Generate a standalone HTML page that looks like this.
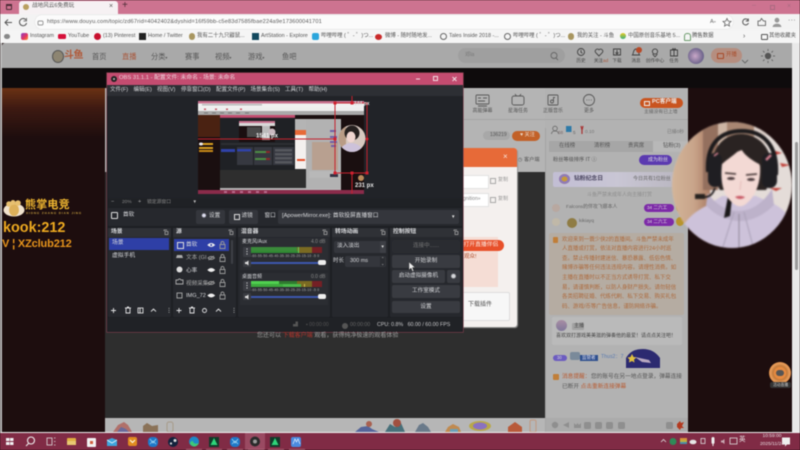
<!DOCTYPE html>
<html lang="zh"><head><meta charset="utf-8"><title>OBS</title>
<style>
html,body{margin:0;padding:0;width:800px;height:450px;overflow:hidden;background:#1d0d0e}
#w{position:absolute;left:0;top:0;width:800px;height:450px;overflow:hidden;font-family:"Liberation Sans","Noto Sans CJK SC",sans-serif;filter:blur(.42px)}
#w div{position:absolute}
.t{white-space:nowrap;line-height:1}
.tx{white-space:nowrap;line-height:1;color:#4b4b4b;font-size:5.6px}
.o{white-space:nowrap;line-height:1;color:#d9dadd;font-size:5.8px}
.n{white-space:nowrap;line-height:1;font-size:7.2px;color:#555}
.h{white-space:nowrap;line-height:1;font-size:4.6px;color:#444;text-align:center}
.b{white-space:nowrap;line-height:1;font-size:5.4px;color:#555}
.c{white-space:nowrap;line-height:1;font-size:5.45px;color:#ad6a3d;left:562px}
.dock{background:#26282d;border-radius:1px}
.hd{background:#2f3136;height:9px}
.btn{background:#393b41;border-radius:2px;text-align:center;color:#d5d6d9;font-size:5.6px;white-space:nowrap}
svg{position:absolute}
</style></head><body><div id="w">

<!-- tab strip -->
<div style="left:0;top:0;width:800px;height:14px;background:#cd7390"></div>
<div style="left:19px;top:1px;width:99px;height:13px;background:#f6f1f3;border-radius:3px 3px 0 0"></div>
<div style="left:6px;top:4px;width:4px;height:4px;border:1px solid #4a2c36;border-radius:1px"></div>
<div style="left:6px;top:4px;width:6px;height:2px;background:#4a2c36"></div>
<div style="left:23px;top:4px;width:6px;height:6px;background:#b9a060;border-radius:50%"></div>
<div class="t" style="left:32px;top:4px;font-size:5.600px;color:#555">战地风云6免费玩</div>
<div class="t" style="left:109px;top:3px;font-size:7px;color:#555">×</div>
<div class="t" style="left:122px;top:1px;font-size:10px;color:#4a2c36">+</div>
<div class="t" style="left:752px;top:2px;font-size:7px;color:#a86a80">–</div>
<div style="left:770px;top:5px;width:3px;height:3px;border:1px solid #a86a80"></div>
<div class="t" style="left:787px;top:3px;font-size:7px;color:#a86a80">×</div>

<!-- address bar -->
<div style="left:0;top:14px;width:800px;height:16px;background:#f3f3f3"></div>
<div style="left:35px;top:15px;width:698px;height:14px;background:#fbfbfb;border-radius:7px;box-shadow:0 0 0 .5px #e2e2e2"></div>
<svg style="left:0;top:14px" width="800" height="16" fill="none" stroke="#555" stroke-width="1">
<path d="M5 8.500h7M8 5.500l-3 3 3 3"/><path d="M26 6a3.600 3.600 0 1 0 .6 3"/><path d="M26.500 4v3h-3" stroke-width=".8"/>
<rect x="38" y="7" width="5" height="4" rx="1" stroke="#777" stroke-width=".7"/>
<path d="M727 4.500l1.200 2.600 2.800.3-2.100 1.900.6 2.800-2.500-1.500-2.500 1.500.6-2.800-2.100-1.900 2.800-.3z" stroke="#666" stroke-width=".8"/>
<path d="M748 6a3 3 0 1 0 .5 3M748.300 4.500v2.500h-2.500" stroke="#555"/>
<path d="M758 11.500V7h2l1.500-2.500L763.500 7h2v4.500z" stroke="#555" stroke-width=".8"/>
<circle cx="777" cy="6.200" r="2.400" fill="#999" stroke="none"/><path d="M772.500 13a4.500 3.400 0 0 1 9 0z" fill="#999" stroke="none"/>
</svg>
<div class="t" style="left:47px;top:19.500px;font-size:5.700px;color:#5a5a5a;letter-spacing:.13px">https://www.douyu.com/topic/zd67rid=4042402&amp;dyshid=16f59bb-c5e83d7585fbae224a9e173600041701</div>
<div class="t" style="left:710px;top:19.500px;font-size:5.500px;color:#666">A<span style="font-size:4px">»</span></div>
<div class="t" style="left:788px;top:17px;font-size:7px;color:#666;letter-spacing:.3px">···</div>

<!-- bookmarks -->
<div style="left:0;top:30px;width:800px;height:13px;background:#f5f5f5"></div>
<div style="left:4px;top:34px;width:6px;height:5px;background:#888;border-radius:3px"></div>
<div style="left:21px;top:33px;width:7px;height:7px;border-radius:2px;background:linear-gradient(135deg,#8a3cc8,#e8385a 60%,#f8a030)"></div>
<div style="left:58px;top:34px;width:8px;height:5px;border-radius:1.500px;background:#d6103a"></div>
<div style="left:94px;top:33px;width:7px;height:7px;border-radius:50%;background:#c8102e"></div>
<div style="left:139px;top:33px;width:7px;height:7px;background:#222"></div>
<div style="left:189px;top:33px;width:6px;height:7px;border-radius:3px;background:#a89660"></div>
<div style="left:252px;top:33px;width:7px;height:7px;background:#12495e"></div>
<div style="left:312px;top:33px;width:7px;height:7px;border-radius:2px;background:#2ca6dc"></div>
<div style="left:375px;top:34px;width:7px;height:6px;border-radius:50%;background:#c92a2a"></div>
<div style="left:440px;top:33px;width:5px;height:5px;border-radius:50%;border:1px solid #666"></div>
<div style="left:504px;top:33px;width:5px;height:5px;border-radius:50%;border:1px solid #666"></div>
<div style="left:568px;top:33px;width:6px;height:7px;border-radius:3px;background:#a89660"></div>
<div style="left:620px;top:33px;width:6px;height:6px;border-radius:50%;background:linear-gradient(#e8c820,#38b080)"></div>
<div style="left:684px;top:33px;width:5px;height:6px;border-radius:3px 3px 1px 1px;border:1px solid #6a9a6a"></div>
<div style="left:761px;top:34px;width:5px;height:4px;border:1px solid #555;border-radius:1px"></div>
<div class="b" style="left:30px;top:34px">Instagram</div>
<div class="b" style="left:68px;top:34px">YouTube</div>
<div class="b" style="left:103px;top:34px">(13) Pinterest</div>
<div class="b" style="left:148px;top:34px">Home / Twitter</div>
<div class="b" style="left:197px;top:34px">我有二十九只鼹鼠...</div>
<div class="b" style="left:261px;top:34px">ArtStation - Explore</div>
<div class="b" style="left:321px;top:34px">哔哩哔哩 ( ゜- ゜)つ...</div>
<div class="b" style="left:385px;top:34px">微博 - 随时随地发...</div>
<div class="b" style="left:449px;top:34px">Tales Inside 2018 -...</div>
<div class="b" style="left:513px;top:34px">哔哩哔哩 ( ゜- ゜)つ...</div>
<div class="b" style="left:577px;top:34px">我的关注 - 斗鱼</div>
<div class="b" style="left:628px;top:34px">中国原创音乐基地 5...</div>
<div class="b" style="left:692px;top:34px">腾售数据</div>
<div class="b" style="left:743px;top:33px;font-size:7px">›</div>
<div class="b" style="left:769px;top:34px">其他收藏夹</div>

<!-- page dim bg -->
<div style="left:0;top:43px;width:800px;height:390px;background:#1d0d0e"></div>
<div style="left:792px;top:43px;width:8px;height:389px;background:#e9e9e9"></div>
<div style="left:795px;top:142px;width:2.500px;height:128px;background:#9a9a9a;border-radius:2px"></div>
<div style="left:0;top:43px;width:2px;height:390px;background:#bbb"></div>

<!-- site header -->
<div style="left:2px;top:43px;width:790px;height:25px;background:#a9a9a9;border-radius:3px 0 0 0"></div>
<div style="left:2px;top:68px;width:790px;height:20px;background:#0e0b0c"></div>
<div style="left:2px;top:88px;width:104px;height:50px;background:linear-gradient(#6b3214,#3e1a12 40%,#1d0d0e)"></div>
<div style="left:52px;top:50px;width:10px;height:11px;border-radius:50%;background:#8d8572;border:1px solid #555"></div>
<div class="t" style="left:64px;top:50.500px;font-size:10px;font-weight:bold;color:#b05a3a;letter-spacing:-.5px">斗鱼</div>
<div class="n" style="left:92px;top:53px">首页</div>
<div class="n" style="left:122px;top:53px;color:#a8563a">直播</div>
<div class="n" style="left:151px;top:53px">分类<span style="font-size:4px">▾</span></div>
<div class="n" style="left:185px;top:53px">赛事</div>
<div class="n" style="left:215px;top:53px">视频<span style="font-size:4px">▾</span></div>
<div class="n" style="left:248px;top:53px">游戏<span style="font-size:4px">▾</span></div>
<div class="n" style="left:282px;top:53px">鱼吧</div>
<div style="left:458px;top:48px;width:107px;height:15px;border-radius:8px;background:#9f9f9f"></div>
<div class="t" style="left:465px;top:53px;font-size:5.200px;color:#777">邓la</div>
<svg style="left:0;top:43px" width="800" height="25" fill="none" stroke="#3f3f3f" stroke-width=".9">
<circle cx="554" cy="12.500" r="3" stroke="#666"/><path d="M556 15l2 2" stroke="#666"/>
<circle cx="581" cy="9" r="3.500"/><path d="M581 7v2.300l1.400 1"/>
<path d="M599 13l-3.500-3.600a2.200 2.200 0 0 1 3.500-2.600 2.200 2.200 0 0 1 3.500 2.600z"/>
<path d="M613.500 6h7v6h-7zM617 7v3.600M615.500 9.500l1.500 1.500 1.500-1.500"/>
<path d="M632.500 12c1-1 .6-6 3.500-6s2.500 5 3.500 6z"/>
<circle cx="655" cy="8.500" r="2.600"/><path d="M655 14l-2.400-3M655 14l2.400-3"/>
<path d="M670.500 7h7v6h-7zM674 7v6M672 7l1-1.500 1 1.500 1-1.500 1 1.500"/>
<circle cx="768" cy="13" r="3.200" fill="#555" stroke="none"/>
<path d="M768 6v2M768 18v2M761 13h2M773 13h2M763 8l1.500 1.500M771.500 16.500l1.500 1.500M763 18l1.500-1.500M771.500 9.500l1.500-1.500" stroke="#666"/>
<path d="M742 17l3 3 3-3" stroke="#666"/>
</svg>
<div style="left:636px;top:47px;width:6px;height:6px;border-radius:50%;background:#b84a28"></div>
<div class="h" style="left:571px;top:59px;width:20px">历史</div>
<div class="h" style="left:589px;top:59px;width:24px">关注<span style="color:#a8563a">ad</span></div>
<div class="h" style="left:607px;top:59px;width:20px">下载</div>
<div class="h" style="left:626px;top:59px;width:20px">消息</div>
<div class="h" style="left:643px;top:59px;width:24px">创作中心</div>
<div class="h" style="left:664px;top:59px;width:20px">任务</div>
<div style="left:688px;top:48px;width:16px;height:16px;border-radius:50%;background:radial-gradient(circle at 45% 50%,#c9a8c8,#73688f 65%,#58708a)"></div>
<div style="left:711px;top:48px;width:31px;height:15px;border-radius:8px;background:#b58e80"></div>
<div style="left:717px;top:53px;width:5px;height:4px;border:1px solid #a84a28;border-radius:1px"></div>
<div class="t" style="left:726px;top:53px;font-size:5.400px;color:#a84a28">开播</div>

<!-- video/left content -->
<div style="left:105px;top:88px;width:440px;height:330px;background:#2e2e2e"></div>
<div style="left:105px;top:88px;width:583px;height:84px;background:#b4b4b4"></div>
<div style="left:545px;top:88px;width:143px;height:344px;background:#b2b2b2"></div>
<div style="left:463px;top:118.500px;width:225px;height:.6px;background:#a5a5a5"></div>
<div style="left:105px;top:418px;width:440px;height:14px;background:#b6b6b6"></div>
<div style="left:545px;top:418px;width:143px;height:14px;background:#ababab"></div>
<div style="left:544.500px;top:128px;width:1px;height:304px;background:#a4a4a4"></div>

<!-- top tool icons -->
<svg style="left:460px;top:90px" width="230" height="40" fill="none" stroke="#585858" stroke-width=".9">
<rect x="16" y="5" width="13" height="9" rx="1"/><path d="M18 8h3M23 8h4M18 11h7M18 16h9"/>
<rect x="52" y="6" width="12" height="9" rx="2"/><path d="M55 4l1.500 2M61 4l-1.500 2"/>
<rect x="88" y="5" width="10" height="10" rx="1"/><circle cx="92" cy="11.500" r="1.500"/><path d="M93.500 11V7.500h1.500"/>
<circle cx="129" cy="10" r="5.500"/><path d="M126.500 10h.7M128.700 10h.7M130.900 10h.7"/>
</svg>
<div class="h" style="left:470px;top:109px;width:25px;font-size:5px;color:#555">高能弹幕</div>
<div class="h" style="left:505px;top:109px;width:26px;font-size:5px;color:#555">星海任务</div>
<div class="h" style="left:540px;top:109px;width:26px;font-size:5px;color:#555">正版音乐</div>
<div class="h" style="left:579px;top:109px;width:20px;font-size:5px;color:#555">更多</div>
<div style="left:640px;top:98px;width:43px;height:10px;border-radius:5px;background:#c9541f"></div>
<div style="left:644px;top:100.500px;width:4px;height:3px;border:.8px solid #eee"></div>
<div class="t" style="left:652px;top:100px;font-size:5.600px;font-weight:bold;color:#eee">PC客户端</div>
<div class="t" style="left:644px;top:111px;font-size:4.800px;color:#666">主播没有已上墙</div>

<div style="left:483px;top:131px;width:27px;height:9px;border-radius:5px;background:#a8a8a8"></div>
<div class="t" style="left:490px;top:133px;font-size:5px;color:#555">136219</div>
<div style="left:512px;top:131px;width:28px;height:10px;border-radius:5px;background:#c26128"></div>
<div class="t" style="left:520px;top:133px;font-size:5.200px;color:#ecd8c8">♥ 关注</div>
<div class="t" style="left:518px;top:158px;font-size:5.200px;color:#555">◷ 客户端</div>

<!-- chat head -->
<svg style="left:550px;top:125px" width="60" height="14" fill="none" stroke="#666" stroke-width=".8">
<circle cx="5" cy="3.500" r="2.300"/><path d="M1.500 9c0-4 7-4 7 0"/>
<rect x="16" y="1" width="5.500" height="6" fill="#2e7aa8" stroke="none"/>
<path d="M31 1l1 4 1-4M32 5v4" stroke="#a83030" stroke-width="1.200"/>
</svg>
<div class="t" style="left:558px;top:131px;font-size:4.600px;color:#7a6a6a">68</div>
<div class="t" style="left:573px;top:131px;font-size:4.600px;color:#666">5</div>
<div class="t" style="left:585px;top:131px;font-size:4.800px;color:#777">0.10</div>
<div class="t" style="left:667px;top:131px;font-size:4.800px;color:#777">已播0秒</div>
<div style="left:549px;top:141px;width:139px;height:11px;background:#a6a6a6"></div>
<div style="left:653px;top:141px;width:35px;height:11px;background:#b8b8b8"></div>
<div class="t" style="left:559px;top:144px;font-size:5.400px;color:#555">在线榜</div>
<div class="t" style="left:594px;top:144px;font-size:5.400px;color:#555">清积榜</div>
<div class="t" style="left:628px;top:144px;font-size:5.400px;color:#555">贵宾席</div>
<div class="t" style="left:663px;top:144px;font-size:5.400px;color:#555">钻粉(3)</div>
<div class="t" style="left:553px;top:157.500px;font-size:5.200px;color:#505050">粉丝等级排序 IT ⓘ</div>
<div style="left:639px;top:155px;width:33px;height:10px;border-radius:5px;background:#5b3ab0"></div>
<div class="t" style="left:648px;top:157.500px;font-size:5px;color:#ddd">成为粉丝</div>
<div style="left:553px;top:172px;width:129px;height:15px;border-radius:2px;background:linear-gradient(90deg,#c2bed4,#c9c6d4 50%,#b9b6c0)"></div>
<div style="left:559px;top:174px;width:11px;height:10px;border-radius:50%;background:#c69a3a;box-shadow:inset 0 0 0 2.500px #8f7ab8"></div>
<div class="t" style="left:574px;top:177px;font-size:5.800px;font-weight:bold;color:#4a4560">钻粉纪念日</div>
<div class="t" style="left:633px;top:177px;font-size:5px;color:#666">今日共有1位粉丝</div>
<div class="t" style="left:587px;top:193px;font-size:5px;color:#8e8e8e">斗鱼严禁未成年人向主播打赏</div>
<div style="left:552px;top:204px;width:8px;height:8px;border-radius:50%;background:#b8a8a0"></div>
<div class="t" style="left:566px;top:206px;font-size:4.900px;color:#666">Falcons的伴攻飞娜本人</div>
<div style="left:552px;top:218px;width:8px;height:8px;border-radius:50%;background:#c0b8a8"></div>
<div style="left:567px;top:218px;width:10px;height:10px;border-radius:50%;background:#8f7c44"></div>
<div class="t" style="left:579px;top:220px;font-size:4.900px;color:#666">kikiayq</div>
<div style="left:644px;top:204px;width:30px;height:8px;border-radius:4px;background:#7d2aa8"></div>
<div class="t" style="left:647px;top:206px;font-size:4.600px;color:#ddd">34 二六工</div>
<div style="left:644px;top:218px;width:30px;height:8px;border-radius:4px;background:#7d2aa8"></div>
<div class="t" style="left:647px;top:220px;font-size:4.600px;color:#ddd">34 二六工</div>
<div style="left:676px;top:203px;width:8px;height:9px;border-radius:50%;background:#b8942c"></div>
<div style="left:676px;top:217px;width:8px;height:9px;border-radius:50%;background:#b8942c"></div>

<!-- chat system message -->
<div style="left:549px;top:233px;width:135px;height:82px;background:#b5aca2;border-radius:2px"></div>
<div style="left:553px;top:237px;width:5px;height:6px;background:#c07e38;border-radius:1px"></div>
<div class="c" style="top:237.500px">欢迎来到一蓑少侠2的直播间。斗鱼严禁未成年</div>
<div class="c" style="top:247px">人直播或打赏，依法对直播内容进行24小时巡</div>
<div class="c" style="top:256.500px">查。禁止传播封建迷信、暴恐暴露、低俗色情、</div>
<div class="c" style="top:266px">赌博诈骗等任何违法违规内容。请理性消费。如</div>
<div class="c" style="top:276px">主播在直播时以不正当方式诱导打赏、私下交</div>
<div class="c" style="top:285.500px">易，请谨慎判断，以防人身财产损失。请勿轻信</div>
<div class="c" style="top:295px">各类招聘征婚、代练代刷、私下交易、购买礼包</div>
<div class="c" style="top:305px">码、游戏/币等广告信息，谨防网络诈骗。</div>

<div style="left:552px;top:317px;width:130px;height:28px;background:#bababa;border-radius:2px"></div>
<div style="left:556px;top:320px;width:11px;height:11px;border-radius:50%;background:linear-gradient(#a88ea4,#80789a)"></div>
<div style="left:572px;top:322.500px;width:12px;height:7px;background:#a2a2a2;border-radius:1px"></div>
<div class="t" style="left:574px;top:323.500px;font-size:5px;color:#444">主播</div>
<div class="t" style="left:556px;top:334px;font-size:5px;color:#444">喜欢双打游戏美美滋的弹奏他的最爱！请点点关注吧！</div>
<div style="left:553px;top:355px;width:14px;height:6px;border-radius:3px;background:#6c5cc0"></div>
<div class="t" style="left:557px;top:356px;font-size:4.200px;color:#ddd">30</div>
<div style="left:570px;top:352px;width:10px;height:8px;background:#7a8a9a;border-radius:2px"></div>
<div style="left:580px;top:354.500px;width:18px;height:6.500px;background:#2e4f8e"></div>
<div class="t" style="left:582px;top:355.500px;font-size:4.500px;color:#dde">监管者</div>
<div class="t" style="left:601px;top:355px;font-size:5.200px;color:#5a7ab0">Thus2：7</div>
<svg style="left:626px;top:349px" width="34" height="20"><path d="M0 19V9C4 2 10 0 17 0s13 3 17 9v10z" fill="#2c2a70"/><path d="M9 8l14 3 2 3-9-1z" fill="#b8a8c0"/><path d="M6 5l1.500 3 3 .5-2.500 2 .5 3-2.500-1.500-3 1.500.5-3-2-2 3-.5z" fill="#e0c040"/></svg>
<div style="left:553px;top:374px;width:6px;height:6px;background:#c07e38;border-radius:1px"></div>
<div class="t" style="left:562px;top:374.500px;font-size:5.700px;color:#b85a30">消息提醒：</div>
<div class="t" style="left:591px;top:374.500px;font-size:5.700px;color:#555">您的账号在另一地点登录，弹幕连接</div>
<div class="t" style="left:562px;top:384.500px;font-size:5.700px;color:#555">已断开 <span style="color:#b85a30">点击重新连接弹幕</span></div>

<!-- input icons -->
<svg style="left:550px;top:419px" width="140" height="13" fill="#8f8f8f">
<circle cx="5" cy="6" r="3.200"/><path d="M13 6l6-3v6z"/><path d="M24 9V4l2 2 1.500-2 1.500 2 2-2v5z"/>
<rect x="34" y="3" width="7" height="7" rx="1.500"/><rect x="45" y="3" width="7" height="7" rx="1.500"/><rect x="56" y="3" width="7" height="7" rx="1.500"/><rect x="68" y="3" width="7" height="7" rx="1.500"/><rect x="116" y="3" width="7" height="7" rx="1.500"/>
<path d="M127 5l3-3 1 2 3-1-2 4 2 2-3 0-1 2-3-3z" fill="#b33a20"/>
</svg>
<!-- gifts -->
<svg style="left:105px;top:418px" width="440" height="14">
<path d="M8 14l5-7 6-3 4 3 4 7z" fill="#b0706a"/><path d="M12 14l4-5 5 2 3 3z" fill="#6a6a9a"/>
<path d="M38 14V8l4-3 5 3 6-1v7z" fill="#8a7258"/>
<rect x="62" y="4" width="6" height="10" rx="2" fill="none" stroke="#a69a88"/>
<path d="M250 14l6-5 7-1 4 3 7 3z" fill="#55659a"/><circle cx="264" cy="6" r="3" fill="#a86050"/>
<path d="M280 14l5-8 5 3 6-4 4 9z" fill="#48707a"/><circle cx="292" cy="5" r="4" fill="#a05040"/>
<path d="M310 14l4-7 4-2 5 4 3 5z" fill="#6a7a8a"/>
<path d="M340 14l3-5 5-3 6 3 2 5z" fill="#c08a50"/><path d="M345 14v-3h8v3z" fill="#6aa0b8"/>
<ellipse cx="375" cy="8" rx="11" ry="5" fill="#b8a84a"/><ellipse cx="375" cy="8" rx="7" ry="3.500" fill="#8a72c0"/>
<path d="M403 14V9l7-5 7 5v5z" fill="#b85a3a"/>
<rect x="425" y="2" width="6" height="12" rx="1.500" fill="none" stroke="#c09880"/>
</svg>

<!-- float activity icon -->
<div style="left:769px;top:362px;width:22px;height:22px;border-radius:50%;background:radial-gradient(circle,#e68a40 0 35%,#c07a3c 45%,#e59a58 60%,#cc7530 100%)"></div>
<div style="left:776px;top:370px;width:8px;height:6px;background:#555;border-radius:3px"></div>
<div style="left:770px;top:382px;width:21px;height:6px;background:#333;border-radius:2px"></div>
<div class="t" style="left:773px;top:383.500px;font-size:3.800px;color:#ccc">活动直播</div>

<!-- webcam -->
<svg style="left:670px;top:120px;filter:blur(.7px)" width="126" height="130" viewBox="670 120 126 130">
<defs><clipPath id="c"><ellipse cx="732" cy="185" rx="60" ry="63"/></clipPath>
<linearGradient id="wd" x1="0" x2="1"><stop offset="0" stop-color="#d4b69a"/><stop offset=".6" stop-color="#c8a48a"/><stop offset="1" stop-color="#a97c64"/></linearGradient></defs>
<g clip-path="url(#c)">
<rect x="670" y="120" width="126" height="130" fill="#e4dcd8"/>
<rect x="670" y="120" width="40" height="130" fill="url(#wd)"/>
<rect x="703" y="120" width="15" height="70" fill="#94705e"/>
<rect x="718" y="120" width="9" height="24" fill="#cdb5a4"/>
<rect x="727" y="120" width="27" height="24" fill="#a88672"/>
<rect x="754" y="120" width="12" height="24" fill="#dccfc8"/>
<path d="M772 150l10 3-7 2zM780 163l10 2-8 2zM770 188l12 0-6 3z" fill="#c04038"/>
<path d="M676 250c2-24 14-36 30-44l16-10h34l18 8c10 5 18 14 20 28v18z" fill="#cdc2da"/>
<path d="M708 193c6 10 18 18 30 18s24-6 34-22l2 16c-10 10-22 16-34 16s-26-6-34-16z" fill="#bdb2ca"/>
<path d="M734 212l-12 38M744 212l10 38" stroke="#a9a0b6" stroke-width="1" fill="none"/>
<path d="M739 214v36" stroke="#8f8798" stroke-width="1"/>
<path d="M728 196l-4 22 6-2 2-18z" fill="#1a1719"/>
<path d="M712 176c-3-28 12-42 29-42s34 14 31 44l-6 12h-46z" fill="#2a2322"/>
<path d="M708 172c-2-30 14-41 34-41s36 13 34 44" fill="none" stroke="#1c1a1c" stroke-width="4"/>
<rect x="708" y="153" width="14" height="34" rx="7" fill="#1f1e22"/>
<rect x="762" y="153" width="15" height="35" rx="7" fill="#1f1e22"/>
<path d="M705 197c5 0 8-3 10-9" stroke="#1c1a1c" stroke-width="1.800" fill="none"/><rect x="695" y="194" width="10" height="5" fill="#26221f"/>
<path d="M722 164c-2 18 1 32 12 40 4 3 8 3 12 0 10-8 15-22 14-38-3-9-8-13-18-16-6 2-16 6-20 14z" fill="#f3d9d4"/>
<path d="M721 165c6-6 14-10 20-17 2 6 10 12 20 17l-2-16-18-6-16 6z" fill="#2a2322"/>
<path d="M725 173l11 1M746 175l11-1" stroke="#3a2c2c" stroke-width="1.600"/>
<ellipse cx="731" cy="178.500" rx="4" ry="1.500" fill="#4a3a3c"/><ellipse cx="751" cy="179.500" rx="4" ry="1.500" fill="#4a3a3c"/>
<path d="M735 197c3-1.500 7-1.500 10 .3-3 2.300-7 2.300-10-.3z" fill="#c85a66"/>
<path d="M741 181l-1 9" stroke="#e4bcb8" stroke-width="1"/>
<path d="M766 160l5-5" stroke="#d48090" stroke-width="2.500"/>
<path d="M714 156l4-3" stroke="#d48090" stroke-width="1.500"/>
</g></svg>

<!-- left ad -->
<svg style="left:3px;top:199px" width="22" height="18"><ellipse cx="11" cy="11" rx="10.500" ry="6.500" fill="#f1e2cd"/><ellipse cx="11" cy="11" rx="5" ry="6" fill="#ddb05a"/><circle cx="6" cy="5" r="2.800" fill="#e8c070"/><circle cx="15" cy="4" r="2.800" fill="#e8c070"/><circle cx="10" cy="3.500" r="2.500" fill="#e8c070"/></svg>
<div class="t" style="left:25px;top:200px;font-size:11px;font-weight:bold;color:#eeb530;letter-spacing:.2px">熊掌电竞</div>
<div class="t" style="left:26px;top:212px;font-size:3px;font-weight:bold;color:#c8a040;letter-spacing:.9px">XIONG ZHANG DIAN JING</div>
<div class="t" style="left:3px;top:220px;font-size:15px;font-weight:bold;color:#eeaa20;transform:scaleX(.96);transform-origin:0 0">kook:212</div>
<div class="t" style="left:2px;top:238.500px;font-size:11px;font-weight:bold;color:#e8951c;letter-spacing:-.15px">V ¦ XZclub212</div>

<!-- dialog -->
<div style="left:300px;top:148px;width:217px;height:179px;background:#f4f0ee;border-radius:3px;box-shadow:1px 1px 1px #999"></div>
<div style="left:300px;top:148px;width:217px;height:19px;background:#e76a38;border-radius:3px 3px 0 0"></div>
<div class="t" style="left:503px;top:153px;font-size:8px;color:#f7e5dc">×</div>
<div style="left:440px;top:175px;width:47px;height:12px;background:#fff;border:.5px solid #e2e2e2"></div>
<div style="left:440px;top:193px;width:47px;height:12px;background:#fff;border:.5px solid #e2e2e2"></div>
<div class="t" style="left:463px;top:196.500px;font-size:5px;color:#888">gnition»</div>
<div style="left:490px;top:178px;width:4px;height:4px;border:.7px solid #aaa"></div>
<div class="t" style="left:498px;top:178px;font-size:5px;color:#999">复制</div>
<div style="left:490px;top:197px;width:4px;height:4px;border:.7px solid #aaa"></div>
<div class="t" style="left:498px;top:197px;font-size:5px;color:#999">复制</div>
<div style="left:440px;top:237px;width:58px;height:50px;background:#f5ddd5"></div>
<div style="left:440px;top:240px;width:64px;height:11px;border-radius:6px;background:#e8502a"></div>
<div class="t" style="left:463.500px;top:242.500px;font-size:5.800px;color:#fbe8e0">打开直播伴侣</div>
<div class="t" style="left:464px;top:255px;font-size:5.500px;color:#b05030">观众!</div>
<div style="left:460px;top:292px;width:48px;height:27px;background:#f7f7f7;border:.5px solid #ddd;border-radius:2px"></div>
<div class="t" style="left:468px;top:302px;font-size:6px;color:#555">下载插件</div>

<!-- OBS window -->
<div style="left:107px;top:73px;width:356px;height:259px;background:#1d1f23;box-shadow:0 0 0 .6px #86404f"></div>
<div style="left:107px;top:73px;width:356px;height:12px;background:#c44c70"></div>
<div style="left:111px;top:76px;width:6px;height:6px;background:#222;border-radius:50%"></div>
<div style="left:113px;top:78px;width:2px;height:2px;background:#bbb;border-radius:50%"></div>
<div class="t" style="left:119px;top:75.500px;font-size:5.800px;color:#ecd3da">OBS 31.1.1 - 配置文件: 未命名 - 场景: 未命名</div>
<svg style="left:405px;top:73px" width="60" height="12" stroke="#f0dbe1" fill="none"><path d="M11 6h4"/><rect x="28.500" y="3.500" width="4" height="4"/><path d="M47.500 4l4 4M51.500 4l-4 4"/></svg>
<div style="left:107px;top:85px;width:356px;height:11px;background:#2d2f34"></div>
<div class="o" style="left:110px;top:88px;font-size:5.500px">文件(F)</div>
<div class="o" style="left:133.500px;top:88px;font-size:5.500px">编辑(E)</div>
<div class="o" style="left:157px;top:88px;font-size:5.500px">视图(V)</div>
<div class="o" style="left:181px;top:88px;font-size:5.500px">停靠窗口(D)</div>
<div class="o" style="left:216px;top:88px;font-size:5.500px">配置文件(P)</div>
<div class="o" style="left:250.500px;top:88px;font-size:5.500px">场景集合(S)</div>
<div class="o" style="left:285px;top:88px;font-size:5.500px">工具(T)</div>
<div class="o" style="left:308.500px;top:88px;font-size:5.500px">帮助(H)</div>

<!-- OBS preview -->
<div style="left:108px;top:96px;width:354px;height:102px;background:#212328"></div>
<svg style="left:0;top:0" width="800" height="450">
<rect x="198" y="101" width="166" height="93" fill="#1a0f10"/>
<rect x="198" y="101" width="166" height="2.500" fill="#c8708e"/>
<rect x="198" y="103.500" width="166" height="4" fill="#f0f0f0"/>
<rect x="198" y="107.500" width="166" height="3.500" fill="#eee"/>
<rect x="198" y="111" width="166" height="4" fill="#a9a9a9"/>
<rect x="202" y="104" width="60" height="1.500" fill="#bbb"/>
<g fill="#777"><rect x="204" y="112.500" width="4" height="1"/><rect x="212" y="112.500" width="4" height="1"/><rect x="220" y="112.500" width="4" height="1"/><rect x="228" y="112.500" width="4" height="1"/><rect x="236" y="112.500" width="4" height="1"/><rect x="245" y="112.500" width="4" height="1"/></g>
<g fill="#c56"><rect x="204" y="108.500" width="2" height="1.500"/><rect x="215" y="108.500" width="2" height="1.500"/><rect x="226" y="108.500" width="2" height="1.500"/><rect x="240" y="108.500" width="2" height="1.500"/></g>
<rect x="198" y="115" width="23" height="22" fill="#4a2212"/>
<rect x="220" y="119" width="91" height="73" fill="#2e2e2e"/>
<rect x="295" y="119" width="46" height="13" fill="#b4b4b4"/>
<rect x="306" y="119" width="35" height="73" fill="#b2b2b2"/>
<rect x="312" y="142" width="26" height="28" fill="#b8a090"/>
<rect x="309" y="171" width="26" height="7" fill="#b8b8b8"/>
<rect x="330" y="174" width="8" height="3" fill="#334"/>
<g fill="#7060a8"><rect x="330" y="130" width="6" height="2"/><rect x="330" y="136" width="7" height="2"/><rect x="330" y="141" width="7" height="2"/><rect x="331" y="145" width="5" height="2"/></g>
<rect x="295" y="130" width="11" height="5" fill="#e76a38"/>
<rect x="295" y="135" width="11" height="34" fill="#f4f0ee"/>
<rect x="297" y="159" width="8" height="2" fill="#e8502a"/>
<rect x="220" y="115" width="75" height="55" fill="#1f2125"/>
<rect x="220" y="115" width="75" height="2.800" fill="#c44c70"/>
<rect x="239" y="121" width="36" height="21" fill="#1a0f10"/>
<rect x="239" y="121" width="36" height="2" fill="#c8708e"/>
<rect x="239" y="123" width="36" height="3" fill="#d8d8d8"/>
<rect x="247" y="127" width="14" height="10" fill="#4a4a4a"/>
<rect x="262" y="126" width="8" height="14" fill="#bbb"/>
<circle cx="272" cy="132" r="3.500" fill="#c9b9c0"/>
<rect x="221" y="149" width="14" height="3" fill="#3042a8"/>
<g fill="#363840"><rect x="237" y="147" width="16" height="18"/><rect x="254" y="147" width="18" height="18"/><rect x="273" y="147" width="21" height="18"/></g>
<rect x="221" y="143" width="73" height="2" fill="#2c2e33"/>
<rect x="237" y="149" width="14" height="2.500" fill="#3042a8"/>
<g fill="#4c8c44"><rect x="255" y="151" width="14" height="2"/><rect x="255" y="158" width="14" height="2"/></g>
<g fill="#8a2a2a"><rect x="266" y="151" width="4" height="2"/><rect x="266" y="158" width="4" height="2"/></g>
<g fill="#55575d"><rect x="275" y="149" width="17" height="2.500"/><rect x="275" y="153" width="17" height="2.500"/><rect x="275" y="157" width="17" height="2.500"/><rect x="275" y="161" width="17" height="2.500"/></g>
<rect x="198" y="190" width="166" height="4" fill="#8a2b4a"/>
<g fill="#c8a" opacity=".7"><rect x="224" y="191" width="3" height="2"/><rect x="232" y="191" width="3" height="2"/><rect x="240" y="191" width="3" height="2"/><rect x="248" y="191" width="3" height="2"/><rect x="256" y="191" width="3" height="2"/><rect x="264" y="191" width="3" height="2"/></g>
<rect x="220" y="188" width="121" height="2" fill="#b4b4b4"/>
<defs><clipPath id="p"><circle cx="352" cy="138.500" r="13.500"/></clipPath></defs>
<circle cx="352" cy="138.500" r="13.500" fill="#d7c8c0"/>
<g clip-path="url(#p)"><rect x="338" y="125" width="8" height="28" fill="#b99c86"/><ellipse cx="352" cy="133" rx="7.500" ry="7.500" fill="#26201f"/><ellipse cx="351" cy="137" rx="4.500" ry="5.500" fill="#f0d5d0"/><path d="M339 152c2-6 7-9 12-9s11 3 13 9z" fill="#cdc2da"/></g>
<rect x="200" y="143" width="13" height="2" fill="#d9a020"/><rect x="199" y="147" width="14" height="2" fill="#d9a020"/><rect x="199" y="150" width="14" height="2" fill="#c88a18"/><ellipse cx="201" cy="144" rx="2" ry="1.500" fill="#eee"/>
<ellipse cx="361" cy="178" rx="3" ry="3" fill="#b98a5a"/>
<g stroke="#c4222e" fill="none"><path d="M198 139h137" stroke-width="1"/><path d="M335 103v70h32V103z" stroke-width="1"/><path d="M352 96v7M352 173v21" stroke-width="1"/></g>
<g fill="#d0202e"><rect x="333.500" y="101.500" width="3" height="3"/><rect x="350.500" y="101.500" width="3" height="3"/><rect x="333.500" y="137.500" width="3" height="3"/><rect x="333.500" y="171.500" width="3" height="3"/><rect x="350.500" y="171.500" width="3" height="3"/><rect x="365.500" y="171.500" width="3" height="3"/><circle cx="367" cy="139" r="1.500"/></g>
<text x="256" y="137.500" font-size="6" font-weight="bold" fill="#f1f1f1" font-family="Liberation Sans">1541 px</text>
<text x="354" y="105" font-size="5" font-weight="bold" fill="#ddd" font-family="Liberation Sans">144 px</text>
<text x="355" y="187" font-size="6" font-weight="bold" fill="#e9e9e9" font-family="Liberation Sans">231 px</text>
</svg>

<!-- OBS preview zoom row + source props -->
<div style="left:108px;top:198px;width:354px;height:9px;background:#1f2125"></div>
<div class="t" style="left:111px;top:199.500px;font-size:5.500px;color:#aaa">−</div>
<div class="t" style="left:122px;top:200.500px;font-size:4.800px;color:#888">20%</div>
<div class="t" style="left:138px;top:199.500px;font-size:5.500px;color:#aaa">+</div>
<div class="t" style="left:147px;top:200.500px;font-size:4.800px;color:#888">锁定源窗口</div>
<div class="t" style="left:192.500px;top:200px;font-size:4.500px;color:#bbb">▼</div>
<div style="left:108px;top:208px;width:354px;height:18px;background:#26282d"></div>
<div style="left:111px;top:212px;width:5px;height:5px;border:.8px solid #ddd;border-top-width:1.800px;border-radius:1px"></div>
<div class="o" style="left:123px;top:213px;font-size:5.600px">酋软</div>
<div style="left:196px;top:209.500px;width:29px;height:14px;background:#34363c;border-radius:2px"></div>
<div class="t" style="left:201px;top:212.500px;font-size:7px;color:#dde">✹</div>
<div class="o" style="left:209px;top:214px;font-size:5.600px">设置</div>
<div style="left:228.500px;top:209.500px;width:29px;height:14px;background:#34363c;border-radius:2px"></div>
<div style="left:234px;top:214px;width:4px;height:4px;border:.7px solid #ddd"></div>
<div class="o" style="left:241.500px;top:214px;font-size:5.600px">滤镜</div>
<div class="o" style="left:264.500px;top:214px;font-size:5.600px">窗口</div>
<div style="left:278px;top:209.500px;width:181px;height:14px;background:#34363c;border-radius:2px"></div>
<div class="o" style="left:282px;top:213.500px;font-size:5.700px">[ApowerMirror.exe]: 酋软投屏直播窗口</div>
<div class="t" style="left:451px;top:214.500px;font-size:4.500px;color:#ddd">▼</div>

<!-- docks -->
<div class="dock" style="left:108px;top:228px;width:63px;height:89px"></div>
<div class="hd" style="left:108px;top:228px;width:63px"></div>
<div class="o" style="left:111px;top:230px;font-weight:bold">场景</div>
<div style="left:109px;top:238px;width:60px;height:12px;background:#2e3fa6"></div>
<div class="o" style="left:112px;top:241px">场景</div>
<div class="o" style="left:112px;top:254px">虚拟手机</div>
<div class="dock" style="left:173px;top:228px;width:63px;height:89px"></div>
<div class="hd" style="left:173px;top:228px;width:63px"></div>
<div class="o" style="left:176px;top:230px;font-weight:bold">源</div>
<div style="left:174px;top:239px;width:55px;height:12px;background:#2e3fa6"></div>
<div style="left:231px;top:240px;width:2px;height:24px;background:#3e4046;border-radius:1px"></div>
<div style="left:177px;top:242px;width:5px;height:5px;border:.8px solid #ddd;border-top-width:1.800px"></div>
<div class="o" style="left:186px;top:243px;font-size:5.600px">酋软</div>
<div class="o" style="left:186px;top:256px;font-size:5.600px;color:#aaa">文本 (GI</div>
<div class="o" style="left:186px;top:269px;font-size:5.600px">心率</div>
<div class="o" style="left:186px;top:281.500px;font-size:5.600px;color:#aaa">视频采集</div>
<div class="o" style="left:186px;top:294px;font-size:5.600px">IMG_72</div>
<svg style="left:0;top:228px" width="400" height="90" fill="none" stroke="#e0e0e2" stroke-width=".9">
<path d="M176 30h7l-1-3h-5z" fill="#aaa" stroke="none"/><circle cx="179.500" cy="41.500" r="3" fill="#ddd" stroke="none"/><path d="M176 56h7v-4h-2l-1-1h-1l-1 1h-2z" stroke="#aaa"/><rect x="177" y="65" width="5" height="5" stroke="#aaa"/>
<g transform="translate(0 5.500)"><path d="M208 11.500q3.200-3 6.500 0q-3.300 3-6.500 0z" fill="#eee" stroke="#eee"/><circle cx="211.200" cy="11.500" r="1" fill="#2e3fa6" stroke="none"/>
<path d="M208 24.500q3.200-3 6.500 0q-3.300 3-6.500 0zM208.500 26.500l5.500-4" stroke="#999"/>
<path d="M208 36.500q3.200-3 6.500 0q-3.300 3-6.500 0z" fill="#eee" stroke="#eee"/>
<path d="M208 49.500q3.200-3 6.500 0q-3.300 3-6.500 0zM208.500 51.500l5.500-4" stroke="#999"/>
<path d="M208 62q3.200-3 6.500 0q-3.300 3-6.500 0z" fill="#eee" stroke="#eee"/></g>
<g stroke="#999" transform="translate(0 3)"><path d="M220 13.500h5v4h-5zM221 13.500v-1.500a1.500 1.500 0 0 1 3 0v1.500"/><path d="M220 26.500h5v4h-5zM221 26.500v-1.500a1.500 1.500 0 0 1 3 0v1.500"/><path d="M220 38.500h5v4h-5zM221 38.500v-1.500a1.500 1.500 0 0 1 3 0v1.500"/><path d="M220 51.500h5v4h-5zM221 51.500v-1.500a1.500 1.500 0 0 1 3 0v1.500"/><path d="M220 64h5v4h-5zM221 64v-1.500a1.500 1.500 0 0 1 3 0v1.500"/></g>
<!-- bottom toolbars -->
<path d="M111 82.500h5M113.500 80v5M176.500 82.500h5M179 80v5"/>
<path d="M126 80h4v5h-4zM125 80h6M127 79h2M190 80h4v5h-4zM189 80h6M191 79h2"/>
<rect x="138" y="80" width="5" height="5"/><path d="M140 80v5"/>
<path d="M151 83.500l2.500-2.500 2.500 2.500M216 83.500l2.500-2.500 2.500 2.500"/>
<circle cx="204.500" cy="82.500" r="2"/>
<path d="M169 80v.6M169 82v.6M169 84v.6M234 80v.6M234 82v.6M234 84v.6"/>
<circle cx="244" cy="81" r="1"/><circle cx="247" cy="83" r="1"/><path d="M258 80v.6M258 82v.6M258 84v.6"/>
<path d="M302 70.500h6M305 67.500v6"/><path d="M364 69v.6M364 71v.6M364 73v.6"/>
<rect x="321" y="68" width="4" height="5"/><path d="M320 68h6"/>
</svg>
<!-- mixer -->
<div class="dock" style="left:238px;top:228px;width:92px;height:89px"></div>
<div class="hd" style="left:238px;top:228px;width:92px"></div>
<div class="o" style="left:241px;top:230px;font-weight:bold">混音器</div>
<div style="left:240px;top:238px;width:88px;height:32px;background:#2b2d32"></div>
<div class="o" style="left:242px;top:240px;font-size:5px">麦克风/Aux</div>
<div class="t" style="left:311px;top:240px;font-size:5px;color:#888">4.0 dB</div>
<div style="left:251px;top:247px;width:46px;height:6px;background:#3a8a3a"></div>
<div style="left:297px;top:247px;width:15px;height:6px;background:#7a6a22"></div>
<div style="left:312px;top:247px;width:10px;height:6px;background:#742025"></div>
<div style="left:297.500px;top:247px;width:1px;height:6px;background:#60d060"></div>
<div style="left:251px;top:250.500px;width:47px;height:2.500px;background:#2f8a33"></div>
<div class="t" style="left:251px;top:255px;font-size:3.400px;color:#b0b0b0;letter-spacing:.2px">-60-55-50-45-40-35-30-25-20-15-10 -5 0</div>
<div style="left:251px;top:262px;width:72px;height:2px;background:#3d56ad"></div>
<div style="left:318px;top:260px;width:8px;height:5px;background:#eee;border-radius:2px"></div>
<div style="left:240px;top:273px;width:88px;height:32px;background:#2b2d32"></div>
<div class="o" style="left:242px;top:274.500px;font-size:5px">桌面音频</div>
<div class="t" style="left:311px;top:274.500px;font-size:5px;color:#888">0.0 dB</div>
<div style="left:251px;top:281px;width:46px;height:6px;background:#2f7a2f"></div>
<div style="left:297px;top:281px;width:15px;height:6px;background:#7a6a22"></div>
<div style="left:312px;top:281px;width:10px;height:6px;background:#742025"></div>
<div style="left:251px;top:281px;width:28px;height:3px;background:#50d050"></div>
<div style="left:283px;top:284px;width:18px;height:3px;background:#4aba4a"></div>
<div style="left:251px;top:284px;width:32px;height:3px;background:#3dab3d"></div>
<div style="left:303.500px;top:284px;width:1.500px;height:3px;background:#d0c050"></div>
<div class="t" style="left:251px;top:289px;font-size:3.400px;color:#b0b0b0;letter-spacing:.2px">-60-55-50-45-40-35-30-25-20-15-10 -5 0</div>
<div style="left:251px;top:296px;width:72px;height:2px;background:#3d56ad"></div>
<div style="left:318px;top:294px;width:8px;height:5px;background:#eee;border-radius:2px"></div>
<div style="left:243px;top:247px;width:8px;height:10px;background:#3a3c42;border-radius:1px"></div>
<div style="left:243px;top:281px;width:8px;height:10px;background:#3a3c42;border-radius:1px"></div>
<div style="left:243px;top:259.500px;width:8px;height:7px;background:#3a3c42;border-radius:1px"></div>
<div style="left:243px;top:293px;width:8px;height:7px;background:#3a3c42;border-radius:1px"></div>
<svg style="left:243px;top:247px" width="9" height="60" fill="#ddd"><circle cx="4" cy="2" r=".6"/><circle cx="4" cy="4.500" r=".6"/><circle cx="4" cy="7" r=".6"/><circle cx="4" cy="36" r=".6"/><circle cx="4" cy="38.500" r=".6"/><circle cx="4" cy="41" r=".6"/><path d="M2 15h1.500l2-1.500v5l-2-1.500H2zM2 49h1.500l2-1.500v5l-2-1.500H2z"/></svg>
<!-- transitions -->
<div class="dock" style="left:332px;top:228px;width:56px;height:89px"></div>
<div class="hd" style="left:332px;top:228px;width:56px"></div>
<div class="o" style="left:335px;top:230px;font-weight:bold">转场动画</div>
<div style="left:334px;top:241px;width:47px;height:12px;background:#34363c;border-radius:2px"></div>
<div class="o" style="left:337px;top:244px;font-size:5.600px">淡入淡出</div>
<div style="left:380px;top:241px;width:6px;height:12px;background:#3d3f45"></div>
<div class="t" style="left:380.500px;top:245px;font-size:4.300px;color:#ddd">▼</div>
<div class="o" style="left:333px;top:259px;font-size:5.500px">时长</div>
<div style="left:345px;top:256px;width:41px;height:11px;background:#34363c;border-radius:2px"></div>
<div class="o" style="left:350px;top:259px;font-size:5.500px">300 ms</div>
<div style="left:380px;top:257px;width:5px;height:9px;background:#2b2d32"></div>
<div class="t" style="left:381px;top:256.500px;font-size:4px;color:#ccc">⌃</div>
<div class="t" style="left:381px;top:262px;font-size:4px;color:#ccc">⌄</div>
<!-- controls -->
<div class="dock" style="left:390px;top:228px;width:72px;height:89px"></div>
<div class="hd" style="left:390px;top:228px;width:72px"></div>
<div class="o" style="left:393px;top:230px;font-weight:bold">控制按钮</div>
<div class="btn" style="left:392px;top:240px;width:68px;height:13px;line-height:13px;background:#2a2c31;color:#777">连接中......</div>
<div class="btn" style="left:392px;top:255px;width:68px;height:13px;line-height:13px">开始录制</div>
<div class="btn" style="left:392px;top:270px;width:53px;height:13px;line-height:13px">启动虚拟摄像机</div>
<div class="btn" style="left:447px;top:270px;width:13px;height:13px;line-height:13px;font-size:8px">✹</div>
<div class="btn" style="left:392px;top:285px;width:68px;height:13px;line-height:13px">工作室模式</div>
<div class="btn" style="left:392px;top:301px;width:68px;height:12px;line-height:12px">设置</div>
<svg style="left:0;top:228px" width="470" height="90" fill="none" stroke="#aaa" stroke-width=".7"><path d="M165 3.500h3v3h-3zM164 3v-1h3M230 3.500h3v3h-3zM229 3v-1h3M324 3.500h3v3h-3zM323 3v-1h3M382 3.500h3v3h-3zM381 3v-1h3M455 3.500h3v3h-3zM454 3v-1h3"/></svg>
<svg style="left:409px;top:262px" width="8" height="11"><path d="M0 0v8l2-2 1.500 3.500 1.200-.6L3.400 5.500H6z" fill="#eee" stroke="#333" stroke-width=".4"/></svg>
<!-- status -->
<div style="left:108px;top:318px;width:354px;height:13px;background:#202226"></div>
<div class="t" style="left:293px;top:322.500px;font-size:5px;color:#555">▟</div>
<div class="t" style="left:306px;top:322.500px;font-size:5px;color:#555">▪ 00:00:00</div>
<div style="left:342px;top:322.500px;width:6px;height:6px;background:#555;border-radius:50%"></div>
<div class="t" style="left:350px;top:322.500px;font-size:5.200px;color:#666">00:00:00</div>
<div class="t" style="left:377px;top:322.500px;font-size:5.300px;color:#c8c8ca">CPU: 0.8%&nbsp;&nbsp; 60.00 / 60.00 FPS</div>

<div class="t" style="left:257px;top:332.500px;font-size:6px;color:#9f9f9f">您还可以 <span style="color:#b8352c">下载客户端</span> 观看，获得纯净极速的观看体验</div>

<!-- bottom -->
<div style="left:0;top:432px;width:800px;height:1px;background:#eee"></div>
<div style="left:0;top:433px;width:800px;height:17px;background:#802b45"></div>
<div style="left:245px;top:433px;width:20px;height:17px;background:#9a4a62"></div>
<svg style="left:0;top:433px" width="800" height="17">
<g fill="#f1f1f3"><rect x="6" y="5" width="3.500" height="3"/><rect x="10" y="5" width="3.500" height="3"/><rect x="6" y="9" width="3.500" height="3"/><rect x="10" y="9" width="3.500" height="3"/></g>
<g fill="none" stroke="#eee" stroke-width="1.100"><circle cx="31" cy="7.500" r="3.500"/><path d="M28.500 10.500l-2.500 2.500"/></g>
<g fill="none" stroke="#ddd" stroke-width=".8"><rect x="47" y="5" width="5" height="7"/><path d="M54 5h1.500M54 8.500h1.500M54 12h1.500"/></g>
<rect x="67" y="5" width="9" height="7" rx="1" fill="#dfb042"/><rect x="67" y="8" width="9" height="4" fill="#e8c872"/>
<rect x="87" y="5" width="9" height="9" rx="1" fill="#f2f2f2"/><rect x="90" y="8" width="3" height="3" fill="#d06040"/>
<path d="M107 7l5-2 5 2v6h-10z" fill="#3ea5dc"/><path d="M107 7l5 3 5-3" stroke="#e8f4fa" fill="none" stroke-width=".8"/>
<rect x="128" y="4" width="9" height="9" rx="2" fill="#e08c20"/><path d="M130 7l2.500 2.500L135 7" stroke="#ffe" fill="none"/>
<rect x="148" y="4" width="10" height="10" rx="4" fill="#1e78c8"/><path d="M150 6l3 4 3-4M150 11l3-3 3 3" stroke="#a5d8f5" fill="none" stroke-width=".7"/>
<circle cx="173" cy="9" r="5" fill="#14233d"/><circle cx="175" cy="7.500" r="1.500" fill="#ddd"/><circle cx="171" cy="10.500" r="1.100" fill="#ddd"/>
<circle cx="194" cy="8.500" r="5" fill="#1e88c8"/><path d="M190 11c3 4 7 3 9-1-2 1-6 1-6-2-2 0-3 1-3 3z" fill="#3ec878"/>
<rect x="209" y="4" width="10" height="10" fill="#123a2a"/><path d="M214 5l3.500 7h-7z" fill="#2ed47a"/>
<rect x="230" y="4" width="10" height="10" rx="4" fill="#1e78c8"/><path d="M232 6l3 4 3-4M232 11l3-3 3 3" stroke="#a5d8f5" fill="none" stroke-width=".7"/>
<circle cx="255" cy="8.500" r="5" fill="#2a2a2a"/><circle cx="255" cy="8.500" r="2" fill="#999"/>
<rect x="270" y="4" width="10" height="10" fill="#123a2a"/><path d="M275 5l3.500 7h-7z" fill="#2ed47a"/>
<rect x="291" y="4" width="10" height="10" rx="2" fill="#4a8be0"/><path d="M293 11l2-5 1.500 3 1.500-3 2 5" stroke="#e6f0ff" fill="none" stroke-width=".7"/>
<g fill="#b9687f"><rect x="186" y="16" width="16" height="1"/><rect x="206" y="16" width="16" height="1"/><rect x="227" y="16" width="16" height="1"/><rect x="248" y="16" width="16" height="1"/><rect x="268" y="16" width="16" height="1"/><rect x="289" y="16" width="16" height="1"/></g>
<path d="M661 9l2.500-2.500L666 9" stroke="#ddd" fill="none" stroke-width=".8"/>
<circle cx="673" cy="8.500" r="3.500" fill="#2f8a58"/>
<rect x="680" y="5" width="7" height="2" fill="#d8903a"/><rect x="680" y="7" width="7" height="2" fill="#c0b040"/><rect x="680" y="9" width="7" height="2" fill="#4a90a8"/>
<ellipse cx="693" cy="9" rx="3.500" ry="2.300" fill="#e6e6e6"/>
<rect x="701" y="5.500" width="4" height="5" fill="none" stroke="#ddd" stroke-width=".8"/>
<rect x="711.500" y="4" width="3" height="7" rx="1.500" fill="#eee"/><path d="M713 11v2" stroke="#eee"/>
<path d="M721 7.500h1.500l2-1.500v5l-2-1.500H721z" fill="#c8a8b2"/>
<rect x="730" y="5" width="7" height="6" fill="none" stroke="#ddd" stroke-width=".8"/>
<path d="M782 4.500h8v7h-3l-2 2v-2h-3z" fill="#eee"/>
</svg>
<div class="t" style="left:739px;top:437px;font-size:6.500px;color:#eee">英</div>
<div class="t" style="left:752px;top:435px;width:40px;text-align:center;font-size:4.900px;color:#e6dbe0">10:59:00</div>
<div class="t" style="left:749px;top:442.500px;width:46px;text-align:center;font-size:4.900px;color:#e6dbe0">2025/11/24</div>
</div></body></html>
